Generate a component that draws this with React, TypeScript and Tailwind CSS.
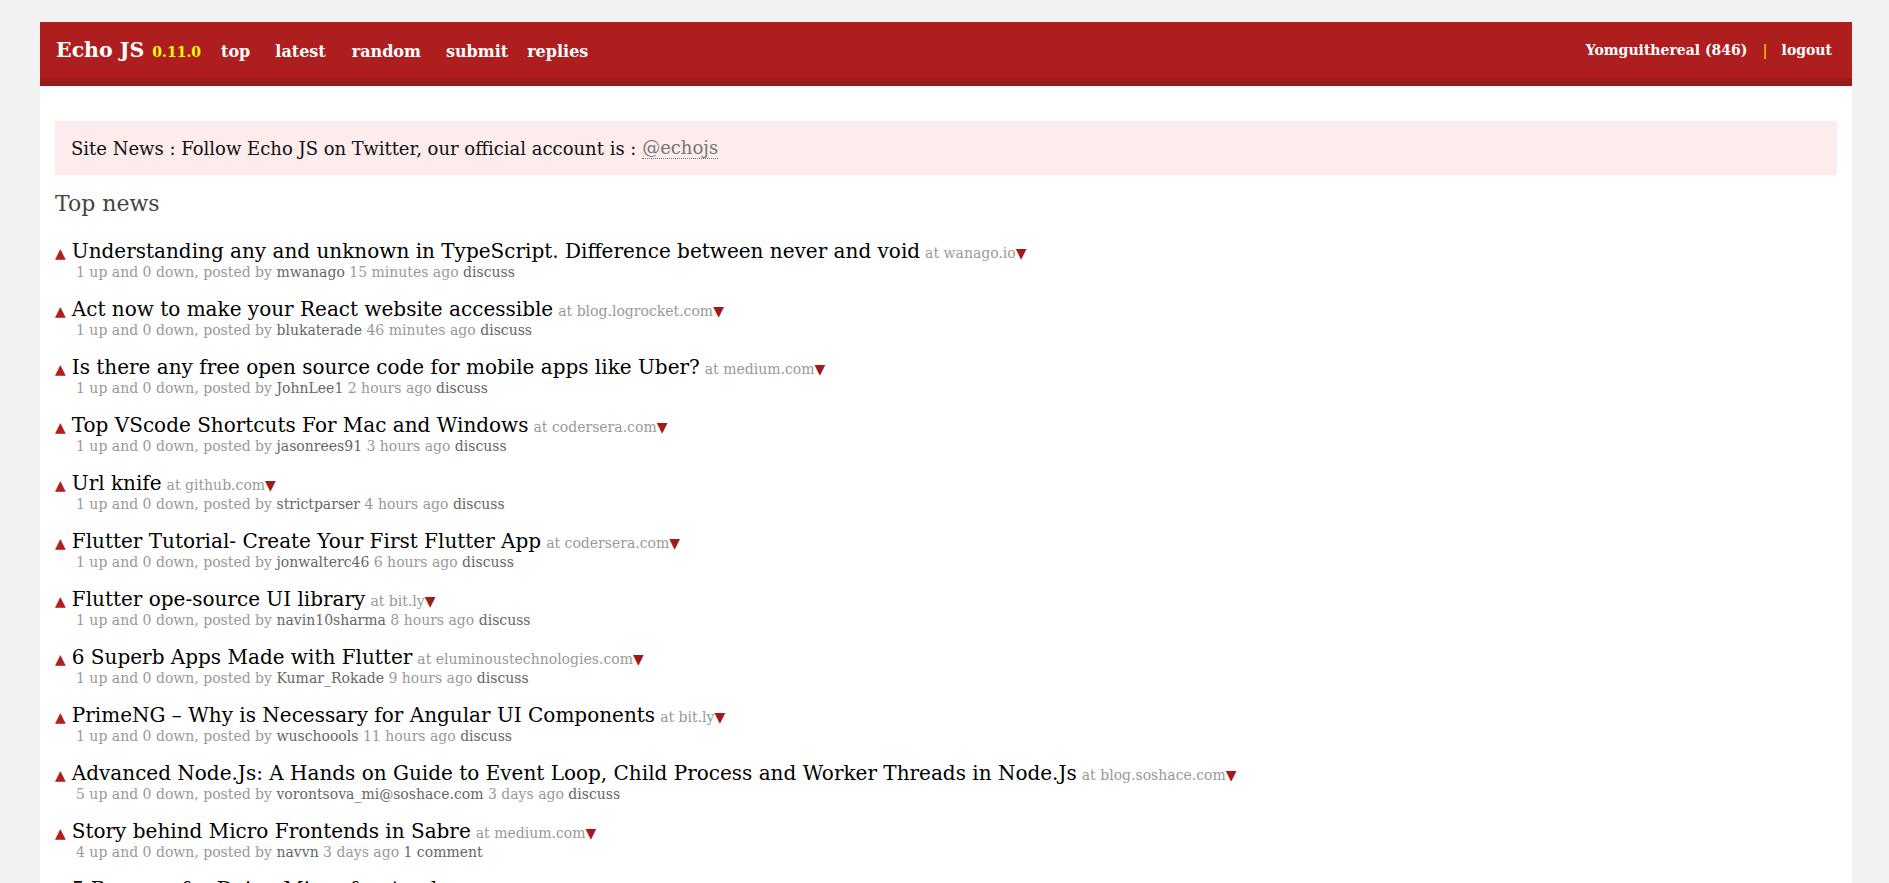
import React from "react";

type Item = {
  title: string;
  domain: string;
  up: number;
  user: string;
  ago: string;
  comments: string;
};

const items: Item[] = [
  { title: "Understanding any and unknown in TypeScript. Difference between never and void", domain: "wanago.io", up: 1, user: "mwanago", ago: "15 minutes ago", comments: "discuss" },
  { title: "Act now to make your React website accessible", domain: "blog.logrocket.com", up: 1, user: "blukaterade", ago: "46 minutes ago", comments: "discuss" },
  { title: "Is there any free open source code for mobile apps like Uber?", domain: "medium.com", up: 1, user: "JohnLee1", ago: "2 hours ago", comments: "discuss" },
  { title: "Top VScode Shortcuts For Mac and Windows", domain: "codersera.com", up: 1, user: "jasonrees91", ago: "3 hours ago", comments: "discuss" },
  { title: "Url knife", domain: "github.com", up: 1, user: "strictparser", ago: "4 hours ago", comments: "discuss" },
  { title: "Flutter Tutorial- Create Your First Flutter App", domain: "codersera.com", up: 1, user: "jonwalterc46", ago: "6 hours ago", comments: "discuss" },
  { title: "Flutter ope-source UI library", domain: "bit.ly", up: 1, user: "navin10sharma", ago: "8 hours ago", comments: "discuss" },
  { title: "6 Superb Apps Made with Flutter", domain: "eluminoustechnologies.com", up: 1, user: "Kumar_Rokade", ago: "9 hours ago", comments: "discuss" },
  { title: "PrimeNG – Why is Necessary for Angular UI Components", domain: "bit.ly", up: 1, user: "wuschoools", ago: "11 hours ago", comments: "discuss" },
  { title: "Advanced Node.Js: A Hands on Guide to Event Loop, Child Process and Worker Threads in Node.Js", domain: "blog.soshace.com", up: 5, user: "vorontsova_mi@soshace.com", ago: "3 days ago", comments: "discuss" },
  { title: "Story behind Micro Frontends in Sabre", domain: "medium.com", up: 4, user: "navvn", ago: "3 days ago", comments: "1 comment" },
  { title: "5 Reasons for Doing Micro-frontends", domain: "medium.com", up: 3, user: "navvn", ago: "4 days ago", comments: "discuss" },
];

function Article({ item }: { item: Item }) {
  return (
    <article className="mb-[15px]">
      <div className="flex items-baseline h-[26px] leading-[26px]">
        <span className="text-[14px] text-[#b01e1e] mr-[6px]">▲</span>
        <span className="text-[20px] text-black">{item.title}</span>
        <span className="text-[14px] text-[#999] ml-[5px]">at {item.domain}</span>
        <span className="text-[14px] text-[#a51818]">▼</span>
      </div>
      <div className="pl-[21px] text-[14px] leading-[17px] text-[#999]">
        {item.up} up and 0 down, posted by <span className="text-[#666]">{item.user}</span> {item.ago}{" "}
        <span className="text-[#666]">{item.comments}</span>
      </div>
    </article>
  );
}

export default function App() {
  return (
    <div className="min-h-screen bg-[#f2f2f2] pt-[22px] font-['DejaVu_Serif',serif]">
      <div className="ml-[40px] w-[1812px] min-h-[861px] bg-white">
        <header className="h-[64px] bg-[#af1e1e] border-b-[8px] border-[#9b1a1a] flex items-center justify-between pl-[16px] pr-[20px]">
          <nav className="flex items-baseline pt-[1px]">
            <span className="text-[20.5px] font-bold text-white">Echo JS</span>
            <span className="ml-[8px] text-[14px] font-bold text-[#ffff00]">0.11.0</span>
            <span className="ml-[20px] text-[16px] font-bold text-white">top</span>
            <span className="ml-[25px] text-[16px] font-bold text-white">latest</span>
            <span className="ml-[26px] text-[16px] font-bold text-white">random</span>
            <span className="ml-[25px] text-[16px] font-bold text-white">submit</span>
            <span className="ml-[19px] text-[16px] font-bold text-white">replies</span>
          </nav>
          <div className="flex items-baseline pt-[1px] text-[14px] font-bold text-white">
            <span>Yomguithereal (846)</span>
            <span className="ml-[15px] mr-[14px] text-[#f0c000]">|</span>
            <span>logout</span>
          </div>
        </header>
        <main className="px-[15px]">
          <div className="mt-[35px] h-[54px] bg-[#fdecec] flex items-center px-[16px] text-[18px] text-[#111]">
            Site News : Follow Echo JS on Twitter, our official account is :&nbsp;
            <span className="text-[#777] border-b border-dotted border-[#777] leading-[20px]">@echojs</span>
          </div>
          <h2 className="mt-[14px] text-[22px] leading-[30px] text-[#444]">Top news</h2>
          <section className="mt-[19px]">
            {items.map((it, i) => (
              <Article key={i} item={it} />
            ))}
          </section>
        </main>
      </div>
    </div>
  );
}
